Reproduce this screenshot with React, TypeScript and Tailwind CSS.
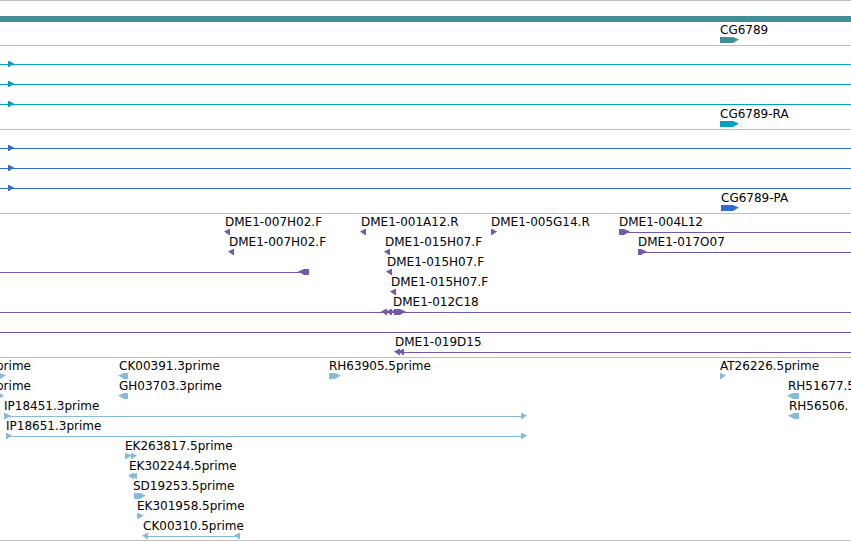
type Exon = { x: number; w: number; dir: "left" | "right" };
type Label = { x: number; text: string };
type Intron = { from: number; to?: number };
type RowData = {
  labels?: Label[];
  exons?: Exon[];
  introns?: Intron[];
  solid?: boolean;
};
type TrackData = { name: string; color: string; rows: RowData[] };

const right = (x: number, w: number): Exon => ({ x, w, dir: "right" });
const left = (x: number, w: number): Exon => ({ x, w, dir: "left" });

const spanning: RowData = { introns: [{ from: 0 }], exons: [right(8, 6)] };

const tracks: TrackData[] = [
  {
    name: "Genes",
    color: "text-[#408e96]",
    rows: [
      { solid: true },
      { labels: [{ x: 720, text: "CG6789" }], exons: [right(720, 19)] },
    ],
  },
  {
    name: "Transcripts",
    color: "text-[#049fc0]",
    rows: [
      spanning,
      spanning,
      spanning,
      { labels: [{ x: 720, text: "CG6789-RA" }], exons: [right(720, 19)] },
    ],
  },
  {
    name: "Proteins",
    color: "text-[#326ccc]",
    rows: [
      spanning,
      spanning,
      spanning,
      { labels: [{ x: 721, text: "CG6789-PA" }], exons: [right(721, 18)] },
    ],
  },
  {
    name: "Clones",
    color: "text-[#7658aa]",
    rows: [
      {
        labels: [
          { x: 225, text: "DME1-007H02.F" },
          { x: 361, text: "DME1-001A12.R" },
          { x: 491, text: "DME1-005G14.R" },
          { x: 619, text: "DME1-004L12" },
        ],
        introns: [{ from: 625 }],
        exons: [left(224, 6), left(360, 6), right(491, 6), right(619, 11)],
      },
      {
        labels: [
          { x: 229, text: "DME1-007H02.F" },
          { x: 385, text: "DME1-015H07.F" },
          { x: 638, text: "DME1-017O07" },
        ],
        introns: [{ from: 642 }],
        exons: [left(228, 6), left(384, 6), right(638, 9)],
      },
      {
        labels: [{ x: 387, text: "DME1-015H07.F" }],
        introns: [{ from: 0, to: 302 }],
        exons: [left(298, 11), left(386, 6)],
      },
      {
        labels: [{ x: 391, text: "DME1-015H07.F" }],
        exons: [left(390, 6)],
      },
      {
        labels: [{ x: 393, text: "DME1-012C18" }],
        introns: [{ from: 0 }],
        exons: [left(381, 6), left(386, 6), left(391, 6), right(394, 12)],
      },
      { introns: [{ from: 0 }] },
      {
        labels: [{ x: 395, text: "DME1-019D15" }],
        introns: [{ from: 400 }],
        exons: [left(394, 6), left(398, 6)],
      },
    ],
  },
  {
    name: "ESTs",
    color: "text-[#86bbdc]",
    rows: [
      {
        labels: [
          { x: -4, text: "prime" },
          { x: 119, text: "CK00391.3prime" },
          { x: 329, text: "RH63905.5prime" },
          { x: 720, text: "AT26226.5prime" },
        ],
        exons: [right(-2, 8), left(118, 10), right(329, 12), right(720, 6)],
      },
      {
        labels: [
          { x: -4, text: "prime" },
          { x: 119, text: "GH03703.3prime" },
          { x: 788, text: "RH51677.5" },
        ],
        exons: [right(-2, 6), left(118, 10), left(787, 12)],
      },
      {
        labels: [
          { x: 4, text: "IP18451.3prime" },
          { x: 789, text: "RH56506." },
        ],
        introns: [{ from: 6, to: 523 }],
        exons: [right(4, 7), right(521, 6), left(788, 11)],
      },
      {
        labels: [{ x: 6, text: "IP18651.3prime" }],
        introns: [{ from: 8, to: 523 }],
        exons: [right(6, 6), right(521, 6)],
      },
      {
        labels: [{ x: 125, text: "EK263817.5prime" }],
        exons: [right(125, 7), right(131, 6)],
      },
      {
        labels: [{ x: 129, text: "EK302244.5prime" }],
        exons: [left(128, 6), left(132, 5)],
      },
      {
        labels: [{ x: 133, text: "SD19253.5prime" }],
        exons: [right(134, 12)],
      },
      {
        labels: [{ x: 137, text: "EK301958.5prime" }],
        exons: [right(137, 7)],
      },
      {
        labels: [{ x: 143, text: "CK00310.5prime" }],
        introns: [{ from: 146, to: 237 }],
        exons: [left(142, 6), left(234, 6)],
      },
    ],
  },
];

// A box with a pointed end; short exons are only the point
const exonPoints = ({ x, w, dir }: Exon) => {
  const head = Math.min(w, 7);
  if (dir === "right") {
    const neck = x + w - head;
    return `${x},0 ${neck + 1},0 ${x + w},2.5 ${neck + 1},6 ${x},6`;
  }
  const neck = x + head;
  return `${x + w},0 ${neck - 1},0 ${x},2.5 ${neck - 1},6 ${x + w},6`;
};

const Row = ({ labels = [], exons = [], introns = [], solid }: RowData) => (
  <div className={solid ? "h-[21px]" : "h-5"}>
    <div className="relative h-[14px]">
      {labels.map((label) => (
        <span
          key={label.x}
          className="absolute top-0 whitespace-nowrap text-black"
          style={{ left: label.x }}
        >
          {label.text}
        </span>
      ))}
    </div>
    <svg className="block h-[6px] w-full" fill="currentColor" aria-hidden="true">
      {solid && <rect width="100%" height="6" />}
      {introns.map(({ from, to }) => (
        <rect
          key={from}
          x={from}
          y="3"
          width={to === undefined ? "100%" : to - from}
          height="1"
        />
      ))}
      {exons.map((exon) => (
        <polygon key={exon.x} points={exonPoints(exon)} />
      ))}
    </svg>
  </div>
);

const Track = ({ name, color, rows }: TrackData) => (
  <section
    aria-label={name}
    className={`border-t border-[#bebebe] pt-px pb-0.5 last:border-b last:pb-px ${color}`}
  >
    {rows.map((row, i) => (
      <Row key={i} {...row} />
    ))}
  </section>
);

const App = () => {
  return (
    <main className="w-full overflow-hidden bg-white font-['DejaVu_Sans',sans-serif] text-[12px] leading-[14px]">
      {tracks.map((track) => (
        <Track key={track.name} {...track} />
      ))}
    </main>
  );
};

export default App;
